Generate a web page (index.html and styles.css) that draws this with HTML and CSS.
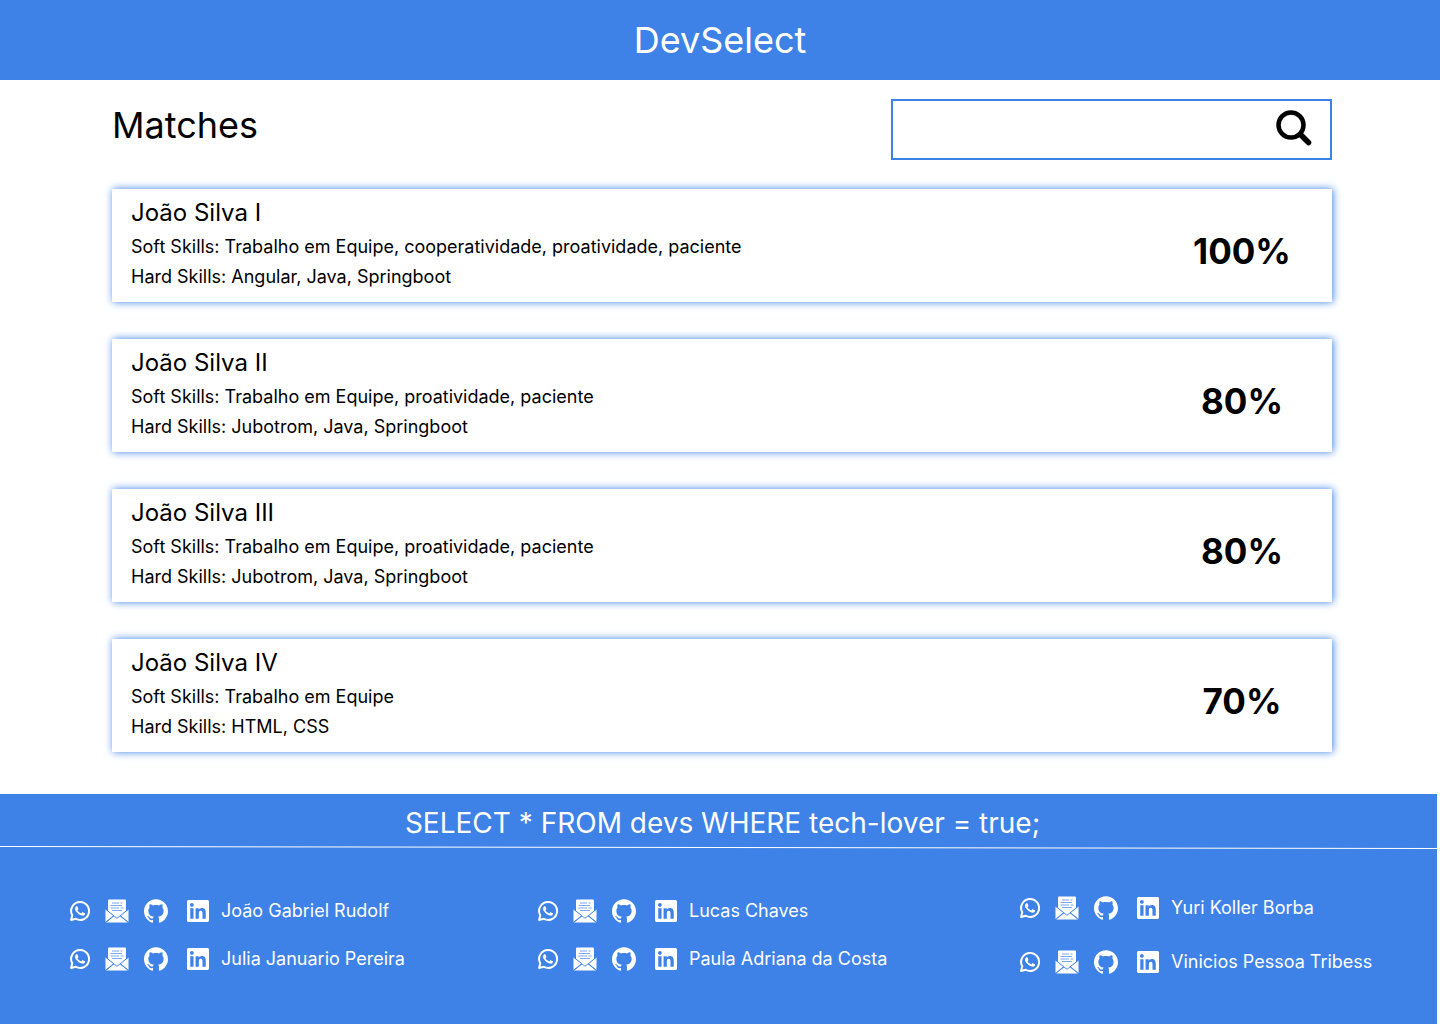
FILE: index.html
```html
<!DOCTYPE html>
<html lang="pt-BR">
<head>
<meta charset="utf-8">
<meta name="viewport" content="width=device-width, initial-scale=1">
<title>DevSelect</title>
<link rel="stylesheet" href="styles.css">
</head>
<body>
<svg class="sprite" aria-hidden="true">
  <symbol id="whatsapp" viewBox="0 0 24 24"><path d="M17.472 14.382c-.297-.149-1.758-.867-2.03-.967-.273-.099-.471-.148-.67.15-.197.297-.767.966-.94 1.164-.173.199-.347.223-.644.075-.297-.15-1.255-.463-2.39-1.475-.883-.788-1.48-1.761-1.653-2.059-.173-.297-.018-.458.13-.606.134-.133.298-.347.446-.52.149-.174.198-.298.298-.497.099-.198.05-.371-.025-.52-.075-.149-.669-1.612-.916-2.207-.242-.579-.487-.5-.669-.51-.173-.008-.371-.01-.57-.01-.198 0-.52.074-.792.372-.272.297-1.04 1.016-1.04 2.479 0 1.462 1.065 2.875 1.213 3.074.149.198 2.096 3.2 5.077 4.487.709.306 1.262.489 1.694.625.712.227 1.36.195 1.871.118.571-.085 1.758-.719 2.006-1.413.248-.694.248-1.289.173-1.413-.074-.124-.272-.198-.57-.347"/><path d="M12.050 1.300A10.700 10.700 0 0 0 2.700 17.200L1.300 22.700L6.900 21.300A10.700 10.700 0 1 0 12.050 1.300Z" fill="none" stroke="currentColor" stroke-width="2.400" stroke-linejoin="round"/></symbol>
  <symbol id="mail" viewBox="0 0 24 24"><path d="M3 1.500Q3 .5 4 .5H20Q21 .5 21 1.500V12L12 19.500L3 12Z"/><path d="M7 4H14M15.500 4H17.500M5.500 6.500H17M5.500 9H14M15.500 9H18.500M7 11.500H17" fill="none" stroke="#3e82e7" stroke-width=".7"/><path d="M.5 10.500L8.300 16.500L.5 23ZM23.500 10.500L15.700 16.500L23.500 23ZM1 23.500L9.300 16.800L12 19L14.700 16.800L23 23.500Z"/><path d="M1 10.500L12 19.300L23 10.500M1.200 23L9 16.800M22.800 23L15 16.800" fill="none" stroke="#3e82e7" stroke-width=".9"/></symbol>
  <symbol id="github" viewBox="0 0 24 24"><path d="M12 .297c-6.630 0-12 5.373-12 12 0 5.303 3.438 9.800 8.205 11.385.6.113.82-.258.82-.577 0-.285-.01-1.040-.015-2.040-3.338.724-4.042-1.610-4.042-1.610C4.422 18.070 3.633 17.700 3.633 17.700c-1.087-.744.084-.729.084-.729 1.205.084 1.838 1.236 1.838 1.236 1.070 1.835 2.809 1.305 3.495.998.108-.776.417-1.305.76-1.605-2.665-.3-5.466-1.332-5.466-5.930 0-1.310.465-2.380 1.235-3.220-.135-.303-.54-1.523.105-3.176 0 0 1.005-.322 3.300 1.230.96-.267 1.980-.399 3-.405 1.020.006 2.040.138 3 .405 2.280-1.552 3.285-1.230 3.285-1.230.645 1.653.24 2.873.12 3.176.765.84 1.230 1.910 1.230 3.220 0 4.610-2.805 5.625-5.475 5.920.42.36.81 1.096.81 2.220 0 1.606-.015 2.896-.015 3.286 0 .315.21.69.825.57C20.565 22.092 24 17.592 24 12.297c0-6.627-5.373-12-12-12"/></symbol>
  <symbol id="linkedin" viewBox="0 0 24 24"><path d="M20.447 20.452h-3.554v-5.569c0-1.328-.027-3.037-1.852-3.037-1.853 0-2.136 1.445-2.136 2.939v5.667H9.351V9h3.414v1.561h.046c.477-.9 1.637-1.850 3.370-1.850 3.601 0 4.267 2.370 4.267 5.455v6.286zM5.337 7.433c-1.144 0-2.063-.926-2.063-2.065 0-1.138.92-2.063 2.063-2.063 1.140 0 2.064.925 2.064 2.063 0 1.139-.925 2.065-2.064 2.065zm1.782 13.019H3.555V9h3.564v11.452zM22.225 0H1.771C.792 0 0 .774 0 1.729v20.542C0 23.227.792 24 1.771 24h20.451C23.200 24 24 23.227 24 22.271V1.729C24 .774 23.200 0 22.222 0h.003z"/></symbol>
</svg>

<header class="topbar"><h1 class="brand">DevSelect</h1></header>

<main class="content">
  <div class="toolbar">
    <h2 class="title">Matches</h2>
    <form class="search" role="search">
      <input class="search-input" type="search" aria-label="Buscar">
      <button class="search-button" type="submit" aria-label="Buscar">
        <svg class="search-icon" viewBox="0 0 36 36" fill="none" stroke="currentColor" aria-hidden="true"><circle cx="15" cy="15" r="12.500" stroke-width="4.500"/><path d="M24.500 24.500L32.500 32.500" stroke-width="5.600" stroke-linecap="round"/></svg>
      </button>
    </form>
  </div>

  <ul class="cards">
    <li class="card">
      <div class="info"><h3 class="name">João Silva I</h3><p class="skills">Soft Skills: Trabalho em Equipe, cooperatividade, proatividade, paciente</p><p class="skills">Hard Skills: Angular, Java, Springboot</p></div>
      <strong class="score">100%</strong>
    </li>
    <li class="card">
      <div class="info"><h3 class="name">João Silva II</h3><p class="skills">Soft Skills: Trabalho em Equipe, proatividade, paciente</p><p class="skills">Hard Skills: Jubotrom, Java, Springboot</p></div>
      <strong class="score">80%</strong>
    </li>
    <li class="card">
      <div class="info"><h3 class="name">João Silva III</h3><p class="skills">Soft Skills: Trabalho em Equipe, proatividade, paciente</p><p class="skills">Hard Skills: Jubotrom, Java, Springboot</p></div>
      <strong class="score">80%</strong>
    </li>
    <li class="card">
      <div class="info"><h3 class="name">João Silva IV</h3><p class="skills">Soft Skills: Trabalho em Equipe</p><p class="skills">Hard Skills: HTML, CSS</p></div>
      <strong class="score">70%</strong>
    </li>
  </ul>
</main>

<footer class="footer">
  <p class="slogan">SELECT * FROM devs WHERE tech-lover = true;</p>
  <svg class="rule" viewBox="0 0 1437 3" preserveAspectRatio="none" aria-hidden="true"><path d="M0 .5L1437 2.500" stroke="#fff" fill="none"/></svg>
  <div class="team">
    <ul class="people">
      <li class="person"><a href="#" aria-label="WhatsApp"><svg class="icon-small"><use href="#whatsapp"/></svg></a><a href="#" aria-label="E-mail"><svg class="icon"><use href="#mail"/></svg></a><a href="#" aria-label="GitHub"><svg class="icon"><use href="#github"/></svg></a><a class="linkedin" href="#"><svg class="icon-medium" aria-hidden="true"><use href="#linkedin"/></svg>João Gabriel Rudolf</a></li>
      <li class="person"><a href="#" aria-label="WhatsApp"><svg class="icon-small"><use href="#whatsapp"/></svg></a><a href="#" aria-label="E-mail"><svg class="icon"><use href="#mail"/></svg></a><a href="#" aria-label="GitHub"><svg class="icon"><use href="#github"/></svg></a><a class="linkedin" href="#"><svg class="icon-medium" aria-hidden="true"><use href="#linkedin"/></svg>Julia Januario Pereira</a></li>
    </ul>
    <ul class="people">
      <li class="person"><a href="#" aria-label="WhatsApp"><svg class="icon-small"><use href="#whatsapp"/></svg></a><a href="#" aria-label="E-mail"><svg class="icon"><use href="#mail"/></svg></a><a href="#" aria-label="GitHub"><svg class="icon"><use href="#github"/></svg></a><a class="linkedin" href="#"><svg class="icon-medium" aria-hidden="true"><use href="#linkedin"/></svg>Lucas Chaves</a></li>
      <li class="person"><a href="#" aria-label="WhatsApp"><svg class="icon-small"><use href="#whatsapp"/></svg></a><a href="#" aria-label="E-mail"><svg class="icon"><use href="#mail"/></svg></a><a href="#" aria-label="GitHub"><svg class="icon"><use href="#github"/></svg></a><a class="linkedin" href="#"><svg class="icon-medium" aria-hidden="true"><use href="#linkedin"/></svg>Paula Adriana da Costa</a></li>
    </ul>
    <ul class="people people-loose">
      <li class="person"><a href="#" aria-label="WhatsApp"><svg class="icon-small"><use href="#whatsapp"/></svg></a><a href="#" aria-label="E-mail"><svg class="icon"><use href="#mail"/></svg></a><a href="#" aria-label="GitHub"><svg class="icon"><use href="#github"/></svg></a><a class="linkedin" href="#"><svg class="icon-medium" aria-hidden="true"><use href="#linkedin"/></svg>Yuri Koller Borba</a></li>
      <li class="person"><a href="#" aria-label="WhatsApp"><svg class="icon-small"><use href="#whatsapp"/></svg></a><a href="#" aria-label="E-mail"><svg class="icon"><use href="#mail"/></svg></a><a href="#" aria-label="GitHub"><svg class="icon"><use href="#github"/></svg></a><a class="linkedin" href="#"><svg class="icon-medium" aria-hidden="true"><use href="#linkedin"/></svg>Vinicios Pessoa Tribess</a></li>
    </ul>
  </div>
</footer>
</body>
</html>
```
FILE: styles.css
```css
* { box-sizing: border-box; }

body, h1, h2, h3, p, ul { margin: 0; padding: 0; }

body {
  display: flex;
  flex-direction: column;
  min-height: 100vh;
  background: #fff;
  color: #000;
  font-family: Inter, "Liberation Sans", sans-serif;
}

ul { list-style: none; }
svg { display: block; }
.sprite { display: none; }

.topbar {
  padding: 18px 0;
  background: #3e82e7;
  color: #fff;
  text-align: center;
}

.brand, .title {
  font-size: 36px;
  font-weight: 400;
  line-height: 44px;
}

.content { padding: 19px 108px 42px 112px; }

.toolbar {
  display: flex;
  justify-content: space-between;
  align-items: flex-start;
  margin-bottom: 29px;
}

.title { padding-top: 4px; }

.search {
  display: flex;
  align-items: center;
  width: 441px;
  height: 61px;
  padding: 0 18px 4px 0;
  border: 2px solid #3e82e7;
}

.search-input {
  flex: 1;
  min-width: 0;
  height: 100%;
  padding: 0 16px;
  border: 0;
  outline: 0;
  background: none;
  font: 400 18px/30px Inter, "Liberation Sans", sans-serif;
}

.search-button {
  padding: 0;
  border: 0;
  background: none;
  color: #000;
  cursor: pointer;
}

.search-icon { width: 36px; height: 36px; }

.cards {
  display: flex;
  flex-direction: column;
  gap: 37px;
}

.card {
  display: flex;
  align-items: center;
  justify-content: space-between;
  padding: 9px 0 10px 19px;
  box-shadow: 1px 0 8px #3e82e7;
}

.name {
  padding-bottom: 4px;
  font-size: 24px;
  font-weight: 400;
  line-height: 30px;
}

.skills { font-size: 18px; line-height: 30px; }

.score {
  width: 180px;
  padding-top: 12px;
  font-size: 35px;
  font-weight: 700;
  line-height: 44px;
  text-align: center;
}

.footer {
  flex: 1;
  margin-right: 3px;
  background: #3e82e7;
  color: #fff;
}

.slogan {
  padding: 12px 0 6px 8px;
  font-size: 28px;
  line-height: 34px;
  text-align: center;
}

.rule { width: 100%; height: 3px; }

.team {
  display: grid;
  grid-template-columns: 468px 482px auto;
  justify-content: start;
  align-items: center;
  padding: 47px 0 46px 70px;
}

.people {
  display: flex;
  flex-direction: column;
  gap: 24px;
}

.people-loose { gap: 30px; }

.person {
  display: flex;
  align-items: center;
  gap: 15px;
}

.person a { color: #fff; text-decoration: none; }

.linkedin {
  display: flex;
  align-items: center;
  gap: 12px;
  padding-left: 4px;
  font-size: 18px;
  line-height: 24px;
}

.icon, .icon-small, .icon-medium { fill: currentColor; }
.icon { width: 24px; height: 24px; }
.icon-small { width: 20px; height: 20px; }
.icon-medium { width: 22px; height: 22px; }
```
